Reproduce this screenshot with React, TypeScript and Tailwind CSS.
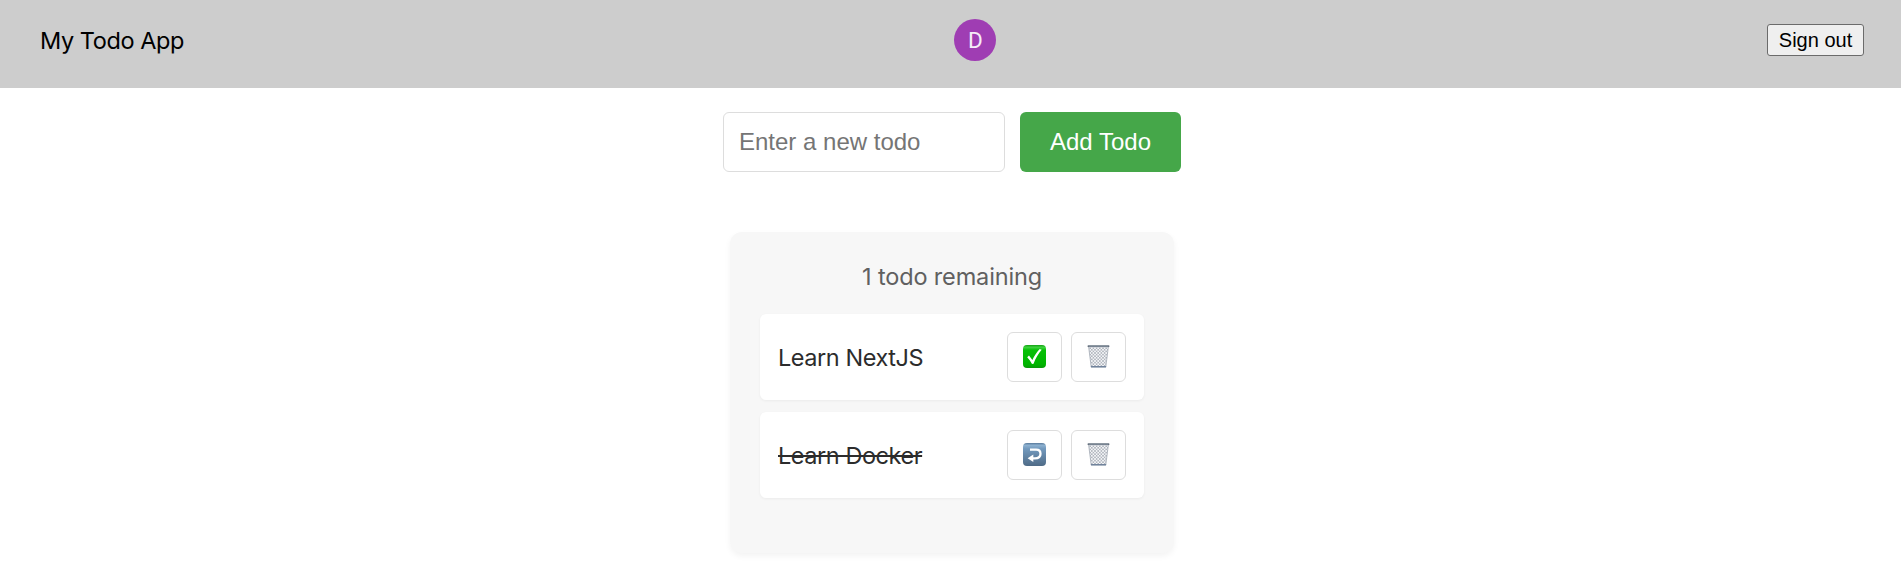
import React from "react";

function CheckIcon() {
  return (
    <svg width="23" height="23" viewBox="0 0 23 23" aria-hidden="true">
      <defs>
        <linearGradient id="check-fill" x1="0" y1="0" x2="0" y2="1">
          <stop offset="0" stopColor="#12a012" />
          <stop offset="0.1" stopColor="#3fd23f" />
          <stop offset="0.22" stopColor="#06c006" />
          <stop offset="0.85" stopColor="#00b400" />
          <stop offset="1" stopColor="#0a980a" />
        </linearGradient>
      </defs>
      <rect width="23" height="23" rx="4" fill="url(#check-fill)" />
      <path d="M4.2 12.2 6 10.5 9.4 14.9C11.2 11 13.7 7 16.7 3.9L18.7 4.7C15.4 8.6 12.4 13.4 10.6 18.7L9 18.9C7.8 16.6 6.2 14.3 4.2 12.2Z" fill="#fff" />
    </svg>
  );
}

function UndoIcon() {
  return (
    <svg width="23" height="23" viewBox="0 0 23 23" aria-hidden="true">
      <defs>
        <linearGradient id="undo-fill" x1="0" y1="0" x2="0" y2="1">
          <stop offset="0" stopColor="#57799a" />
          <stop offset="0.1" stopColor="#8db1d0" />
          <stop offset="0.25" stopColor="#7299bd" />
          <stop offset="1" stopColor="#4f6b87" />
        </linearGradient>
      </defs>
      <rect width="23" height="23" rx="4" fill="url(#undo-fill)" />
      <path d="M7 6.6H13.2C16 6.6 17.5 8.4 17.5 10.7C17.5 13.5 15.4 15.3 12 15.3H9.5" fill="none" stroke="#fff" strokeWidth="2.3" />
      <path d="M4.6 15.3 10.3 11.4V19.1Z" fill="#fff" />
    </svg>
  );
}

function TrashIcon() {
  return (
    <svg width="23" height="23" viewBox="0 0 23 23" aria-hidden="true">
      <defs>
        <pattern id="mesh" width="3.2" height="3.2" patternUnits="userSpaceOnUse">
          <path d="M0 0 3.2 3.2M3.2 0 0 3.2" stroke="#9098a2" strokeWidth="0.55" />
        </pattern>
      </defs>
      <path d="M1.6 1.6H21.4L18.8 21.8H4.2Z" fill="#f6f7f9" />
      <path d="M1.6 1.6H21.4L18.8 21.8H4.2Z" fill="url(#mesh)" stroke="#a3abb5" strokeWidth="0.8" />
      <rect x="0.6" y="0.2" width="21.8" height="1.9" rx="0.7" fill="#66717f" />
      <path d="M2 1.2H21" stroke="#9ba9b9" strokeWidth="0.5" />
      <path d="M3.8 21H19.2L19 22.5H4Z" fill="#71839c" />
    </svg>
  );
}

function IconButton({ label, children }: { label: string; children: React.ReactNode }) {
  return (
    <button aria-label={label} className="flex h-[50px] w-[55px] items-center justify-center rounded-md border border-[#ddd] bg-white pb-[2px]">
      {children}
    </button>
  );
}

const todos = [
  { text: "Learn NextJS", done: false },
  { text: "Learn Docker", done: true },
];

export default function App() {
  return (
    <div className="h-[571px] overflow-hidden bg-white font-['Inter','Liberation_Sans',sans-serif] text-2xl">
      <header className="flex h-[88px] items-center justify-between bg-[#cdcdcd] pr-[37px] pb-2 pl-10 text-black">
        <span className="pt-[2px] text-[23.5px] tracking-[-0.43px]">My Todo App</span>
        <div className="flex size-[42px] items-center justify-center rounded-full bg-[#9f3db3] font-['Roboto',sans-serif] text-[22.5px] font-normal text-white/90">D</div>
        <button className="h-8 w-[97px] rounded-[3px] border border-[#6b6b6b] bg-[#efefef] font-['Liberation_Sans',sans-serif] text-xl leading-none">Sign out</button>
      </header>

      <main className="flex flex-col items-center pt-6">
        <form className="ml-[3px] flex h-[60px] gap-[15px] font-['Liberation_Sans',sans-serif]" onSubmit={(e) => e.preventDefault()}>
          <input
            placeholder="Enter a new todo"
            className="w-[282px] rounded-md border border-[#ddd] bg-white px-[15px] placeholder:text-[#757575]"
          />
          <button className="w-[161px] rounded-md bg-[#45a749] text-white">Add Todo</button>
        </form>

        <section className="mt-[60px] ml-[3px] h-[321px] w-[444px] rounded-xl bg-[#f7f7f7] px-[30px] pt-[31px] shadow-[0_3px_6px_rgba(0,0,0,0.05)]">
          <h2 className="h-[51px] text-center text-[23.5px] leading-7 tracking-[-0.15px] text-[#606060]">1 todo remaining</h2>
          <ul className="flex flex-col gap-3">
            {todos.map((todo) => (
              <li key={todo.text} className="flex h-[86px] items-center justify-between rounded-md bg-white px-[18px] tracking-[-0.45px] shadow-[0_1px_3px_rgba(0,0,0,0.05)]">
                <span className={todo.done ? "pt-[2px] text-[23.5px] text-[#2c2c2c] line-through decoration-2" : "pt-[2px] text-[23.5px] text-[#2c2c2c]"}>{todo.text}</span>
                <div className="flex gap-[9px]">
                  <IconButton label="Toggle">{todo.done ? <UndoIcon /> : <CheckIcon />}</IconButton>
                  <IconButton label="Delete"><TrashIcon /></IconButton>
                </div>
              </li>
            ))}
          </ul>
        </section>
      </main>
    </div>
  );
}
